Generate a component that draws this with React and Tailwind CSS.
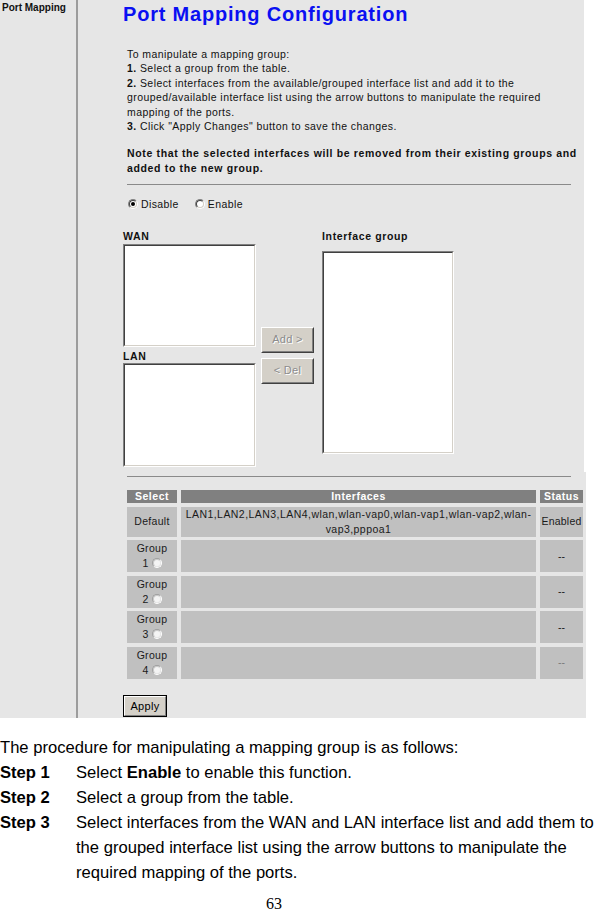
function Radio({ checked }) {
  return (
    <span className="inline-flex w-[10px] h-[10px] shrink-0 rounded-full border border-t-[#808080] border-l-[#808080] border-b-white border-r-white">
      <span className="flex w-full h-full items-center justify-center rounded-full bg-white border border-t-[#404040] border-l-[#404040] border-b-[#d4d0c8] border-r-[#d4d0c8]">
        {checked ? <span className="w-[4px] h-[4px] rounded-full bg-black" /> : null}
      </span>
    </span>
  );
}

function DimRadio() {
  return (
    <span className="inline-flex w-[10px] h-[10px] shrink-0 rounded-full border border-t-[#a0a0a0] border-l-[#a0a0a0] border-b-white border-r-white">
      <span className="w-full h-full rounded-full bg-[#f4f4f4] border border-t-[#c8c8c8] border-l-[#c8c8c8] border-b-[#e8e8e8] border-r-[#e8e8e8]" />
    </span>
  );
}

function DisabledButton({ children }) {
  return (
    <div className="h-[26px] w-[53px] bg-[#d4d0c8] border border-t-white border-l-white border-r-[#404040] border-b-[#404040]">
      <div className="h-full w-full border border-t-[#d4d0c8] border-l-[#d4d0c8] border-r-[#808080] border-b-[#808080] flex items-center justify-center text-[11px] text-[#8c8c8c] tracking-[0.3px] [text-shadow:1px_1px_0_#ffffff]">
        {children}
      </div>
    </div>
  );
}

function GroupCell({ n }) {
  return (
    <div className="bg-[#c0c0c0] flex flex-col items-center justify-center text-[10.5px] leading-[14.4px] tracking-[0.3px] text-[#1a1a1a]">
      <div>Group</div>
      <div className="flex items-center h-[15px]">
        <span>{n}</span>
        <span className="ml-[3px]">
          <DimRadio />
        </span>
      </div>
    </div>
  );
}

export default function App() {
  return (
    <div className="w-[594px] h-[911px] overflow-hidden bg-white font-['Liberation_Sans',Arial,sans-serif] text-black">
      <div className="flex h-[718px]">
        <div className="w-[78px] shrink-0 bg-[#e6e6e6] border-r-2 border-[#9c9c9c] pl-[2px] pt-[2px]">
          <div className="text-[10px] leading-[12px] font-bold whitespace-nowrap text-[#111]">Port Mapping</div>
        </div>
        <div className="w-[508px] flex flex-col">
          <div className="w-[506px] h-[472px] shrink-0 bg-[#e6e6e6] pl-[45px] pt-[4px]">
            <div className="text-[20px] leading-[20px] font-bold text-[#0a10f2] tracking-[0.8px] whitespace-nowrap">
              Port Mapping Configuration
            </div>
            <div className="mt-[23px] ml-[4px] text-[10.5px] leading-[14.4px] tracking-[0.42px] whitespace-nowrap text-[#111]">
              To manipulate a mapping group:
              <br />
              <b>1.</b> Select a group from the table.
              <br />
              <b>2.</b> Select interfaces from the available/grouped interface list and add it to the
              <br />
              grouped/available interface list using the arrow buttons to manipulate the required
              <br />
              mapping of the ports.
              <br />
              <b>3.</b> Click "Apply Changes" button to save the changes.
            </div>
            <div className="mt-[13px] ml-[4px] text-[10.5px] leading-[14.4px] tracking-[0.65px] font-bold whitespace-nowrap text-[#111]">
              Note that the selected interfaces will be removed from their existing groups and
              <br />
              added to the new group.
            </div>
            <div className="mt-[9px] ml-[4px] w-[444px] border-t border-[#8a8a8a]" />
            <div className="mt-[12px] ml-[5px] h-[14.4px] flex items-center text-[10.5px] tracking-[0.4px] text-[#111]">
              <Radio checked />
              <span className="ml-[3px]">Disable</span>
              <span className="ml-[16px]">
                <Radio />
              </span>
              <span className="ml-[3px]">Enable</span>
            </div>
            <div className="mt-[17px] flex items-start">
              <div className="w-[133px]">
                <div className="font-bold text-[10.5px] leading-[14.4px] tracking-[0.65px] text-[#111]">WAN</div>
                <div className="mt-[1px] h-[103px] bg-white border border-t-[#808080] border-l-[#808080] border-r-white border-b-white">
                  <div className="h-full border border-t-[#404040] border-l-[#404040] border-r-[#d4d0c8] border-b-[#d4d0c8]" />
                </div>
                <div className="mt-[2px] font-bold text-[10.5px] leading-[14.4px] tracking-[0.65px] text-[#111]">LAN</div>
                <div className="h-[104px] bg-white border border-t-[#808080] border-l-[#808080] border-r-white border-b-white">
                  <div className="h-full border border-t-[#404040] border-l-[#404040] border-r-[#d4d0c8] border-b-[#d4d0c8]" />
                </div>
              </div>
              <div className="ml-[5px] mt-[98px] flex flex-col gap-[5px]">
                <DisabledButton>Add &gt;</DisabledButton>
                <DisabledButton>&lt; Del</DisabledButton>
              </div>
              <div className="ml-[8px]">
                <div className="font-bold text-[10.5px] leading-[14.4px] tracking-[0.65px] whitespace-nowrap text-[#111]">
                  Interface group
                </div>
                <div className="mt-[8px] w-[132px] h-[203px] bg-white border border-t-[#808080] border-l-[#808080] border-r-white border-b-white">
                  <div className="h-full border border-t-[#404040] border-l-[#404040] border-r-[#d4d0c8] border-b-[#d4d0c8]" />
                </div>
              </div>
            </div>
          </div>
          <div className="flex-1 bg-[#e6e6e6] pt-[4px]">
            <div className="ml-[49px] w-[444px] border-t border-[#8a8a8a]" />
            <div className="mt-[13px] ml-[49px] grid grid-cols-[50px_355px_43px] grid-rows-[13px_30px_32px_32px_32px_32px] gap-x-[4px] gap-y-[3.5px] text-[10.5px] leading-[14.4px]">
              <div className="bg-[#808080] text-white font-bold flex items-center justify-center tracking-[0.5px]">Select</div>
              <div className="bg-[#808080] text-white font-bold flex items-center justify-center tracking-[0.5px]">Interfaces</div>
              <div className="bg-[#808080] text-white font-bold flex items-center justify-center tracking-[0.5px]">Status</div>

              <div className="bg-[#c0c0c0] flex items-center justify-center tracking-[0.3px] text-[#1a1a1a]">Default</div>
              <div className="bg-[#c0c0c0] flex items-center justify-center text-center tracking-[0.45px] text-[#1a1a1a] whitespace-nowrap">
                <div>
                  LAN1,LAN2,LAN3,LAN4,wlan,wlan-vap0,wlan-vap1,wlan-vap2,wlan-
                  <br />
                  vap3,pppoa1
                </div>
              </div>
              <div className="bg-[#c0c0c0] flex items-center justify-center tracking-[0.2px] text-[#1a1a1a] whitespace-nowrap">Enabled</div>

              <GroupCell n="1" />
              <div className="bg-[#c0c0c0]" />
              <div className="bg-[#c0c0c0] flex items-center justify-center text-[#1a1a1a]">--</div>

              <GroupCell n="2" />
              <div className="bg-[#c0c0c0]" />
              <div className="bg-[#c0c0c0] flex items-center justify-center text-[#1a1a1a]">--</div>

              <GroupCell n="3" />
              <div className="bg-[#c0c0c0]" />
              <div className="bg-[#c0c0c0] flex items-center justify-center text-[#1a1a1a]">--</div>

              <GroupCell n="4" />
              <div className="bg-[#c0c0c0]" />
              <div className="bg-[#c0c0c0] flex items-center justify-center text-[#7a7a7a]">--</div>
            </div>
            <div className="mt-[16.5px] ml-[45px] w-[44px] h-[22px] border border-black bg-[#d4d0c8]">
              <div className="h-full w-full border border-t-white border-l-white border-r-[#808080] border-b-[#808080] flex items-center justify-center text-[11px] tracking-[0.3px] text-black">
                Apply
              </div>
            </div>
          </div>
        </div>
      </div>
      <div className="mt-[16.5px] text-[16.6px] leading-[25px] whitespace-nowrap text-black">
        <div>The procedure for manipulating a mapping group is as follows:</div>
        <div className="flex">
          <div className="w-[76px] shrink-0 font-bold">Step 1</div>
          <div>
            Select <b>Enable</b> to enable this function.
          </div>
        </div>
        <div className="flex">
          <div className="w-[76px] shrink-0 font-bold">Step 2</div>
          <div>Select a group from the table.</div>
        </div>
        <div className="flex">
          <div className="w-[76px] shrink-0 font-bold">Step 3</div>
          <div>
            Select interfaces from the WAN and LAN interface list and add them to
            <br />
            the grouped interface list using the arrow buttons to manipulate the
            <br />
            required mapping of the ports.
          </div>
        </div>
      </div>
      <div className="mt-[11px] ml-[266px] font-['Liberation_Serif',serif] text-[16px] leading-[16px]">63</div>
    </div>
  );
}
